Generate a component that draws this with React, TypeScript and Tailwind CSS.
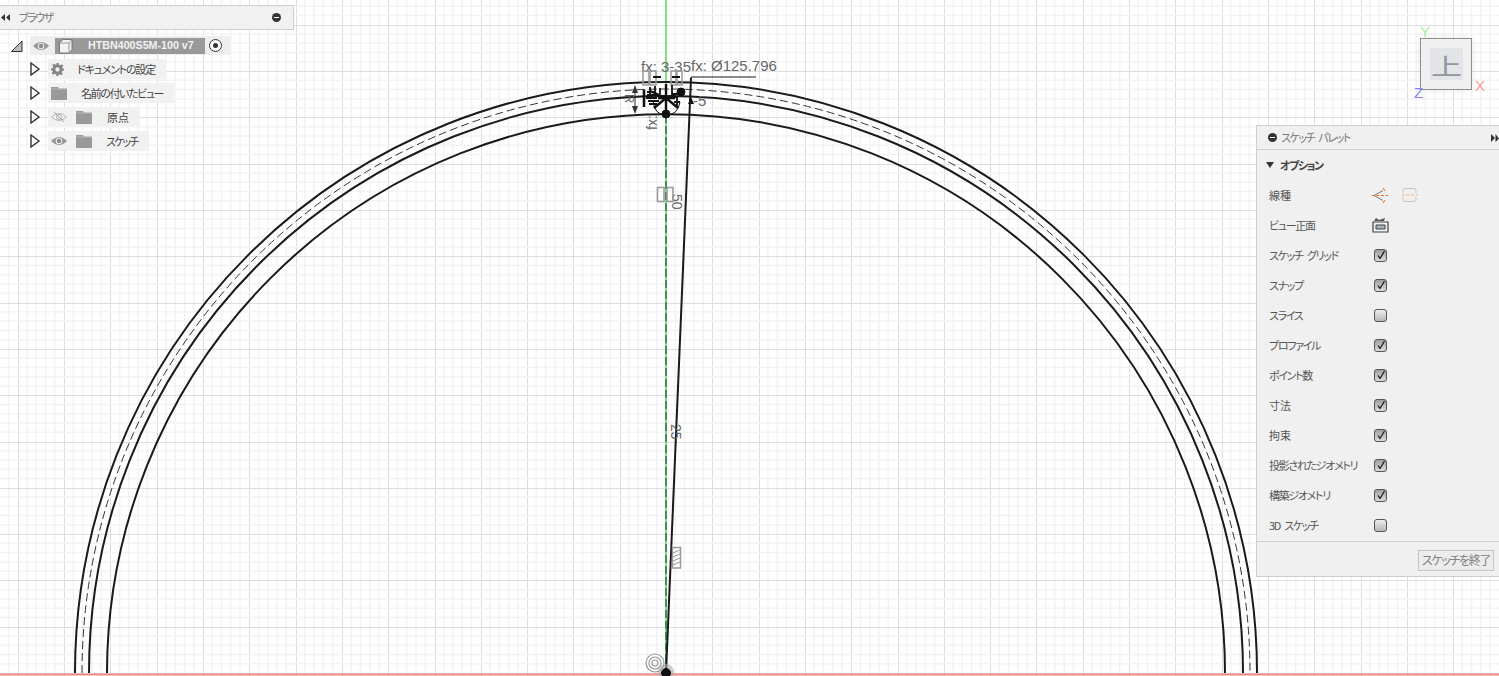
import type { ReactNode } from "react";

// Sketch geometry: centre of the belt profile, in page pixels.
const CX = 666;
const CY = 673;
const GRID_STEP = 9.26;

const PALETTE_ROWS: { label: string; checked?: boolean; kind?: "lines" | "view"; kanji?: boolean }[] = [
  { label: "線種", kind: "lines", kanji: true },
  { label: "ビュー正面", kind: "view" },
  { label: "スケッチ グリッド", checked: true },
  { label: "スナップ", checked: true },
  { label: "スライス", checked: false },
  { label: "プロファイル", checked: true },
  { label: "ポイント数", checked: true },
  { label: "寸法", checked: true, kanji: true },
  { label: "拘束", checked: true, kanji: true },
  { label: "投影されたジオメトリ", checked: true },
  { label: "構築ジオメトリ", checked: true },
  { label: "3D スケッチ", checked: false },
];

function Disclosure() {
  return (
    <svg width="10" height="14" viewBox="0 0 10 14" className="shrink-0">
      <path d="M1 1 L9 7 L1 13 Z" fill="#fff" stroke="#333" strokeWidth="1.4" />
    </svg>
  );
}

function Folder() {
  return (
    <svg width="16" height="14" viewBox="0 0 16 14" className="shrink-0">
      <path d="M0 1 H7 L8 2.5 H16 V14 H0 Z" fill="#999" />
      <path d="M0 3 H16" stroke="#ccc" strokeWidth="0.6" />
    </svg>
  );
}

function Gear() {
  return (
    <svg width="13" height="13" viewBox="0 0 24 24" className="shrink-0">
      <path
        fill="#858585"
        fillRule="evenodd"
        d="M10 0h4l.6 3.3 2.3 1 2.8-1.9 2.9 2.9-1.9 2.8 1 2.3L24 10v4l-3.3.6-1 2.3 1.9 2.8-2.9 2.9-2.8-1.9-2.3 1L14 24h-4l-.6-3.3-2.3-1-2.8 1.9-2.9-2.9 1.9-2.8-1-2.3L0 14v-4l3.3-.6 1-2.3-1.9-2.8 2.9-2.9 2.8 1.9 2.3-1zM12 8a4 4 0 1 0 0 8 4 4 0 0 0 0-8z"
      />
    </svg>
  );
}

function SolidEye() {
  return (
    <svg width="16" height="10" viewBox="0 0 16 10" className="shrink-0">
      <path d="M0 5 Q8 -3 16 5 Q8 13 0 5 Z" fill="#999" />
      <circle cx="8" cy="5" r="3.2" fill="#eee" />
      <circle cx="8" cy="5" r="2.2" fill="#8c8c8c" />
    </svg>
  );
}

function HiddenEye() {
  return (
    <svg width="16" height="12" viewBox="0 0 16 12" className="shrink-0">
      <path d="M0.5 6 Q8 -1 15.5 6 Q8 13 0.5 6 Z" fill="none" stroke="#b5b5b5" />
      <circle cx="8" cy="6" r="2.5" fill="none" stroke="#b5b5b5" />
      <path d="M3 1 L13 11" stroke="#a5a5a5" />
    </svg>
  );
}

function MinusBadge() {
  return (
    <span className="flex h-[9px] w-[9px] items-center justify-center rounded-full bg-[#333]">
      <span className="h-px w-[5px] bg-white" />
    </span>
  );
}

function TreeRow({ children, label, labelClass }: { children: ReactNode; label: string; labelClass: string }) {
  return (
    <div className="flex h-6 items-center">
      <div className="flex w-[40px] justify-end">
        <Disclosure />
      </div>
      <div className="ml-[8px] flex h-[20px] items-center bg-[#f1f1f1] pl-[3px] pr-[11px]">
        {children}
        <span className={`text-[11px] whitespace-nowrap text-[#444] ${labelClass}`}>{label}</span>
      </div>
    </div>
  );
}

function BrowserPanel() {
  return (
    <div className="w-[294px]">
      <div className="mt-[5px] flex h-[25px] items-center justify-between border border-l-0 border-[#cfcfcf] bg-[#f1f1f1] pr-[12px]">
        <div className="flex items-center">
          <svg width="9" height="7" viewBox="0 0 9 7" className="ml-px">
            <path d="M4 0 V7 L0 3.5 Z M9 0 V7 L5 3.5 Z" fill="#333" />
          </svg>
          <span className="ml-[9px] text-[11px] tracking-[-1.5px] text-[#777]">ブラウザ</span>
        </div>
        <MinusBadge />
      </div>
      <div className="mt-[6px] flex h-[19px] items-center">
        <svg width="12" height="12" viewBox="0 0 12 12" className="ml-[11px] shrink-0">
          <path d="M0.5 11.5 L11 1 V11.5 Z" fill="#bbb" stroke="#333" />
        </svg>
        <div className="ml-[7px] flex h-[19px] items-center bg-[#eee] pl-[3px] pr-[8px]">
          <SolidEye />
          <div className="ml-[6px] flex h-[16px] w-[150px] items-center bg-[#999]">
            <svg width="16" height="16" viewBox="0 0 16 16" className="ml-[3px] shrink-0">
              <path d="M1.5 5 L5 1.5 H14 V12 L11 15 H1.5 Z" fill="#f3f3f3" stroke="#777" />
              <path d="M11 15 V5 H1.5 M11 5 L14 1.5" fill="none" stroke="#999" />
            </svg>
            <span className="ml-[14px] font-['Liberation_Sans',sans-serif] text-[10.7px] font-bold whitespace-nowrap text-[#f2f2f2]">
              HTBN400S5M-100 v7
            </span>
          </div>
          <span className="ml-[4px] flex h-[13px] w-[13px] items-center justify-center rounded-full border border-[#333] bg-white">
            <span className="h-[5px] w-[5px] rounded-full bg-[#333]" />
          </span>
        </div>
      </div>
      <div className="pt-[2px]">
        <TreeRow label="ドキュメントの設定" labelClass="ml-[13px] tracking-[-1.2px]">
          <Gear />
        </TreeRow>
        <TreeRow label="名前の付いたビュー" labelClass="ml-[14px] tracking-[-1.4px]">
          <Folder />
        </TreeRow>
        <TreeRow label="原点" labelClass="ml-[15px]">
          <HiddenEye />
          <span className="ml-[9px]">
            <Folder />
          </span>
        </TreeRow>
        <TreeRow label="スケッチ" labelClass="ml-[14px] tracking-[-1.8px]">
          <SolidEye />
          <span className="ml-[9px]">
            <Folder />
          </span>
        </TreeRow>
      </div>
    </div>
  );
}

function Check({ checked }: { checked?: boolean }) {
  return (
    <span
      className={`flex h-[13px] w-[13px] items-center justify-center rounded-[3px] border border-[#555] bg-gradient-to-b ${
        checked ? "from-[#a0a0a0] to-[#dcdcdc]" : "from-[#ededed] to-[#b8b8b8]"
      }`}
    >
      {checked && (
        <svg width="10" height="10" viewBox="0 0 10 10">
          <path d="M2 5.5 L4 8.5 L8.5 1" fill="none" stroke="#111" strokeWidth="1.2" />
        </svg>
      )}
    </span>
  );
}

function LineTypeIcons() {
  return (
    <div className="-ml-[2px] flex items-center gap-[13px]">
      <svg width="17" height="17" viewBox="0 0 17 17">
        <path d="M2 8.5 L11 3.5 M2 8.5 L11 13.5" stroke="#777" fill="none" />
        <path d="M0 8.5 H16" stroke="#e07020" strokeDasharray="3 1.5" />
        <path d="M11 1 L13 4 M11 16 L13 13" stroke="#e07020" />
      </svg>
      <svg width="16" height="16" viewBox="0 0 16 16">
        <path d="M3 1.5 H12 Q14 1.5 14 4 V6 M14 10 V12 Q14 14.5 12 14.5 H3 Q1 14.5 1 12 V10 M1 6 V4 Q1 1.5 3 1.5" fill="none" stroke="#c4c4c4" />
        <path d="M0 8 H16" stroke="#efb48c" strokeDasharray="3 1.5" />
      </svg>
    </div>
  );
}

function ViewIcon() {
  return (
    <svg width="17" height="16" viewBox="0 0 17 16" className="-ml-[2px]">
      <path d="M1 5 H16 V15 H1 Z" fill="#f2f2f2" stroke="#3d4248" strokeWidth="1.2" />
      <path d="M4 8 H13 V12 H4 Z" fill="#a9b1bd" stroke="#3d4248" />
      <path d="M2 4 L4 1 L7 3 L13 1 L12 4" fill="#555" />
    </svg>
  );
}

function SketchPalette() {
  return (
    <div className="h-[452px] w-[243px] border border-r-0 border-[#cfcfcf] bg-[#f0f0f0]">
      <div className="flex h-[24px] items-center justify-between border-b border-[#cfcfcf] pl-[11px]">
        <div className="flex items-center gap-[4px]">
          <MinusBadge />
          <span className="text-[11px] tracking-[-1.4px] [word-spacing:3px] text-[#777]">スケッチ パレット</span>
        </div>
        <svg width="8" height="8" viewBox="0 0 8 8">
          <path d="M0 0 V8 L4 4 Z M4.5 0 V8 L8 4.5 Z" fill="#333" />
        </svg>
      </div>
      <div className="flex h-[30px] items-center gap-[6px] pl-[9px]">
        <span className="h-0 w-0 border-x-[4.5px] border-t-[6px] border-x-transparent border-t-[#333]" />
        <span className="text-[11px] font-bold tracking-[-1.4px] text-[#444]">オプション</span>
      </div>
      <div className="flex flex-col">
        {PALETTE_ROWS.map((row) => (
          <div key={row.label} className="flex h-[30px] items-center pl-[12px]">
            <span
              className={`w-[105px] text-[11px] whitespace-nowrap text-[#555] ${
                row.kanji ? "" : "tracking-[-1.3px] [word-spacing:3px]"
              }`}
            >
              {row.label}
            </span>
            {row.kind === "lines" ? <LineTypeIcons /> : row.kind === "view" ? <ViewIcon /> : <Check checked={row.checked} />}
          </div>
        ))}
      </div>
      <div className="mt-px flex h-[35px] items-center justify-end border-t border-[#cfcfcf] pr-[5px] pt-[2px]">
        <button className="flex h-[21px] w-[76px] items-center justify-center border border-[#c4c4c4] bg-[#ececec] text-[12px] tracking-[-1.3px] whitespace-nowrap text-[#808080]">
          スケッチを終了
        </button>
      </div>
    </div>
  );
}

function ViewCube() {
  return (
    <div className="relative h-[52px] w-[52px] border border-[#8e8e8e] bg-[#eeeeee]/90 shadow-[0_0_8px_rgba(0,0,0,0.08)]">
      <div className="absolute left-[9px] top-[9px] flex h-[32px] w-[33px] items-center justify-center bg-[#e3e4e8] text-[31px] leading-none text-[#8f979c]">
        <span className="inline-block scale-y-[0.75]">上</span>
      </div>
      <span className="absolute -top-[15px] -left-px font-['Liberation_Sans',sans-serif] text-[15px] leading-none text-[#9ff09f]">Y</span>
      <span className="absolute -bottom-[11px] -left-[7px] font-['Liberation_Sans',sans-serif] text-[15px] leading-none text-[#8080ff]">Z</span>
      <span className="absolute -right-[14px] bottom-[-4px] font-['Liberation_Sans',sans-serif] text-[15px] leading-none text-[#ff9999]">X</span>
    </div>
  );
}

// The drawing surface: grid, sketch circles, dimensions and constraint glyphs.
function SketchCanvas() {
  const cols = Array.from({ length: 175 }, (_, i) => i - 75);
  const rows = Array.from({ length: 75 }, (_, i) => i);
  const arc = (r: number) => `M ${CX - r} ${CY} A ${r} ${r} 0 0 1 ${CX + r} ${CY}`;
  return (
    <svg className="absolute inset-0" width="1499" height="676" viewBox="0 0 1499 676">
      <rect width="1499" height="676" fill="#ffffff" />
      {cols.map((i) => {
        const major = i % 5 === 0;
        const x = CX + i * GRID_STEP;
        return major ? (
          <path key={i} d={`M ${Math.round(x) + 0.5} 0 V 676`} stroke="#dedede" />
        ) : (
          <path key={i} d={`M ${x} 0 V 676`} stroke="#f3f3f3" strokeWidth="1.5" />
        );
      })}
      {rows.map((i) => {
        const major = i % 5 === 0;
        const y = CY - i * GRID_STEP;
        return major ? (
          <path key={i} d={`M 0 ${Math.round(y) + 0.5} H 1499`} stroke="#dedede" />
        ) : (
          <path key={i} d={`M 0 ${y} H 1499`} stroke="#f3f3f3" strokeWidth="1.5" />
        );
      })}
      <path d="M 0 674.5 H 1499" stroke="#f08a8a" strokeWidth="2" />
      <path d="M 666 0 V 673" stroke="#7fe07f" strokeWidth="2" />
      <path d="M 666 115 V 673" stroke="#3f8f57" strokeWidth="2" strokeDasharray="8 3" />
      <g fill="none" stroke="#1a1a1a">
        <path d={arc(591)} strokeWidth="2" />
        <path d={arc(577)} strokeWidth="2" />
        <path d={arc(584)} strokeWidth="1" strokeDasharray="8 4" stroke="#333" />
        <path d={arc(559)} strokeWidth="2" />
        <path d="M 691 78 L 666 673" strokeWidth="2" />
        <path d="M 691 78 V 77 H 756" strokeWidth="1" />
      </g>
      <g fontFamily="Liberation Sans, sans-serif" fill="#666">
        <text x="641" y="72" fontSize="15">fx: 3-35</text>
        <text x="691" y="71" fontSize="15">fx: Ø125.796</text>
        <text x="693" y="106" fontSize="15">-5</text>
        <text transform="translate(625 94) rotate(90)" fontSize="13">R</text>
        <text transform="translate(657 130) rotate(-90)" fontSize="14">fx:</text>
        <text transform="translate(672 194) rotate(90)" fontSize="14">50</text>
        <text transform="translate(671 424) rotate(90)" fontSize="14">25</text>
      </g>
      <g fill="none" stroke="#9a9a9a">
        <rect x="657.5" y="187.5" width="6.5" height="14" strokeWidth="1.6" />
        <rect x="667" y="187.5" width="6" height="14" strokeWidth="1.6" />
        <rect x="643" y="71" width="6" height="14" strokeWidth="1.5" />
        <rect x="650" y="71" width="6" height="14" strokeWidth="1.5" />
        <rect x="671" y="71" width="5" height="14" strokeWidth="1.5" />
        <rect x="677" y="71" width="5" height="14" strokeWidth="1.5" />
        <rect x="672.5" y="547.5" width="8" height="20.5" strokeWidth="1.5" />
        <path d="M673 553 L680 550 M673 557 L680 554 M673 561 L680 558 M673 565 L680 562" />
        <circle cx="655" cy="663" r="9" strokeWidth="1.2" />
        <circle cx="655" cy="663" r="6" strokeWidth="1.2" />
        <circle cx="655" cy="663" r="3" strokeWidth="1.2" />
      </g>
      <circle cx="666" cy="672" r="8" fill="#aaa" opacity="0.6" />
      {/* Pile of dimension arrows and constraints around the tooth tip */}
      <g fill="#111" stroke="#111">
        <circle cx="666" cy="673" r="4.5" />
        <circle cx="666" cy="114" r="4" />
        <circle cx="681" cy="92" r="4" />
        <path
          d="M 666 98 L 650 91 M 666 98 L 682 92 M 666 98 L 666 114 M 666 98 L 654 108 M 666 98 L 678 108 M 666 98 L 666 84 M 658 98 H 675"
          strokeWidth="2.4"
          fill="none"
        />
        <path d="M 653 77 H 661 M 672 77 H 680" strokeWidth="2.2" fill="none" />
        <path d="M 644 90 V 107" strokeWidth="2.6" fill="none" />
        <path
          d="M 647 92 H 654 M 647 95 H 658 M 646 98 H 657 M 648 101 H 659 M 649 104 H 657 M 672 94 H 679 M 672 97 H 677 M 674 102 H 680 M 650 87 V 96 M 655 86 V 96 M 672 85 V 96 M 677 96 V 106 M 660 88 V 94"
          strokeWidth="1.8"
          fill="none"
        />
        <path d="M 653 100 Q 654 115 666 115 Q 678 115 680 102" strokeWidth="1" fill="none" />
        <path d="M 635 92 V 110" fill="none" strokeWidth="1" stroke="#333" />
        <path d="M 632 93 L 635 85 L 638 93 Z M 632 106 L 635 114 L 638 106 Z" fill="#333" stroke="none" />
        <path d="M 688 104 L 691 97 L 694 104 Z" strokeWidth="0" />
      </g>
    </svg>
  );
}

export default function App() {
  return (
    <div className="relative h-[676px] w-[1499px] overflow-hidden bg-white font-['Noto_Sans_CJK_JP','Liberation_Sans',sans-serif] [font-feature-settings:'palt']">
      <SketchCanvas />
      <div className="absolute left-0 top-0">
        <BrowserPanel />
      </div>
      <div className="absolute left-[1420px] top-[38px]">
        <ViewCube />
      </div>
      <div className="absolute right-0 top-[125px]">
        <SketchPalette />
      </div>
    </div>
  );
}
